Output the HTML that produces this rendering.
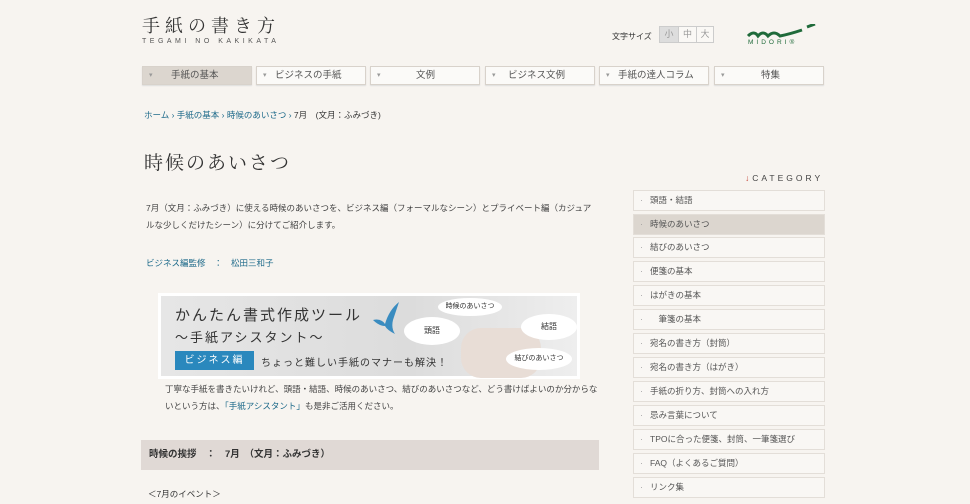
<!DOCTYPE html><html><head><meta charset="utf-8"><style>
*{margin:0;padding:0;box-sizing:border-box}
body{width:970px;height:504px;overflow:hidden;background:#f7f4f0;font-family:"Liberation Sans","Noto Sans CJK JP",sans-serif;color:#333;position:relative}
.a{position:absolute}
.nav div{position:absolute;top:66px;height:19px;width:110px;border:1px solid #d8d2cb;background:#fbfaf8;font-size:9.5px;line-height:17px;color:#555;box-shadow:0 1px 1px #ddd}
.nav div span{position:absolute;left:6px;font-size:7px;color:#999}
.side div{position:absolute;left:633px;width:192px;height:21px;border:1px solid #e3ded8;background:#f9f7f4;font-size:8.5px;line-height:19px;color:#555;padding-left:16px}
.side div:before{content:"·";position:absolute;left:6px;color:#999}
</style></head><body>
<div class="a" style="left:142px;top:12px;font-size:18px;letter-spacing:5px;font-family:'Noto Serif CJK SC',serif;color:#333">手紙の書き方</div>
<div class="a" style="left:142px;top:38px;font-size:7px;letter-spacing:3.5px;color:#555">TEGAMI NO KAKIKATA</div>
<div class="a" style="left:612px;top:31px;font-size:8px;color:#333">文字サイズ</div>
<div class="a" style="left:659px;top:26px;width:55px;height:17px;border:1px solid #ccc;background:#faf8f5;font-size:9px;line-height:15px;color:#999"><span style="display:inline-block;width:18px;text-align:center;background:#ddd">小</span><span style="display:inline-block;width:18px;text-align:center;border-left:1px solid #ccc">中</span><span style="display:inline-block;width:17px;text-align:center;border-left:1px solid #ccc">大</span></div>
<svg class="a" style="left:745px;top:24px" width="80" height="22"><path d="M3 12 q6 -6 10 0 q5 -6 10 0 q6 -6 12 0 q10 -2 22 -6 M62 3 l8 -3" stroke="#1f6a3a" stroke-width="3" fill="none"/><text x="3" y="20" font-size="6.5" fill="#1f6a3a" letter-spacing="3" font-family="Liberation Sans">MIDORI®</text></svg>
<div class="nav">
<div style="left:142px;background:#dcd6cf"><span>▾</span><b style="font-weight:normal;position:absolute;left:28px">手紙の基本</b></div>
<div style="left:256px"><span>▾</span><b style="font-weight:normal;position:absolute;left:18px">ビジネスの手紙</b></div>
<div style="left:370px"><span>▾</span><b style="font-weight:normal;position:absolute;left:45px">文例</b></div>
<div style="left:485px"><span>▾</span><b style="font-weight:normal;position:absolute;left:22px">ビジネス文例</b></div>
<div style="left:599px"><span>▾</span><b style="font-weight:normal;position:absolute;left:18px">手紙の達人コラム</b></div>
<div style="left:714px"><span>▾</span><b style="font-weight:normal;position:absolute;left:46px">特集</b></div>
</div>
<div class="a" style="left:144px;top:109px;font-size:8.5px;color:#1e6a8a">ホーム › 手紙の基本 › 時候のあいさつ › <span style="color:#333">7月　(文月：ふみづき)</span></div>
<div class="a" style="left:144px;top:148px;font-size:19px;letter-spacing:2px;font-family:'Noto Serif CJK SC',serif">時候のあいさつ</div>
<div class="a" style="left:146px;top:200px;width:450px;font-size:8.5px;line-height:17px;color:#444">7月（文月：ふみづき）に使える時候のあいさつを、ビジネス編（フォーマルなシーン）とプライベート編（カジュアルな少しくだけたシーン）に分けてご紹介します。</div>
<div class="a" style="left:146px;top:257px;font-size:8.5px;color:#1e6a8a">ビジネス編監修　：　松田三和子</div>
<div class="a" style="left:158px;top:293px;width:422px;height:86px;background:linear-gradient(90deg,#e6e6e6,#dcdcdc 60%,#eee);border:3px solid #fff">
<div class="a" style="left:14px;top:8px;font-size:15px;letter-spacing:2px;color:#333">かんたん書式作成ツール</div>
<div class="a" style="left:14px;top:31px;font-size:13px;letter-spacing:2px;color:#333">〜手紙アシスタント〜</div>
<div class="a" style="left:14px;top:55px;width:79px;height:19px;background:#2a88bd;color:#fff;font-size:10px;line-height:19px;text-align:center;letter-spacing:2px">ビジネス編</div>
<div class="a" style="left:100px;top:58px;font-size:10px;letter-spacing:1px">ちょっと難しい手紙のマナーも解決！</div>
<svg class="a" style="left:210px;top:4px" width="30" height="36"><path d="M2 20 q8 -2 12 4 q4 -14 14 -22 q-4 12 -6 18 q-2 8 2 14 q-8 -4 -10 -8 q-6 0 -12 -6z" fill="#3a8cc0"/></svg>
<div class="a" style="left:300px;top:32px;width:80px;height:50px;background:#e8ddd6;border-radius:20px"></div>
<div class="a" style="left:243px;top:21px;width:56px;height:28px;border-radius:50%;background:#fff;font-size:8px;text-align:center;line-height:28px">頭語</div>
<div class="a" style="left:277px;top:2px;width:64px;height:18px;border-radius:50%;background:#fff;font-size:7px;text-align:center;line-height:18px">時候のあいさつ</div>
<div class="a" style="left:360px;top:18px;width:56px;height:26px;border-radius:50%;background:#fff;font-size:8px;text-align:center;line-height:26px">結語</div>
<div class="a" style="left:345px;top:52px;width:66px;height:22px;border-radius:50%;background:#fff;font-size:7px;text-align:center;line-height:22px">結びのあいさつ</div>
</div>
<div class="a" style="left:165px;top:381px;width:440px;font-size:8.5px;line-height:17px;color:#444">丁寧な手紙を書きたいけれど、頭語・結語、時候のあいさつ、結びのあいさつなど、どう書けばよいのか分からないという方は、<span style="color:#1e6a8a">「手紙アシスタント」</span>も是非ご活用ください。</div>
<div class="a" style="left:141px;top:440px;width:458px;height:30px;background:#e0d9d5;font-size:9.5px;font-weight:bold;line-height:30px;padding-left:8px;color:#333">時候の挨拶　：　7月　（文月：ふみづき）</div>
<div class="a" style="left:148px;top:488px;font-size:8.5px">＜7月のイベント＞</div>
<div class="a" style="left:745px;top:173px;font-size:8.5px;letter-spacing:3px;color:#444"><span style="color:#c0392b">↓</span>CATEGORY</div>
<div class="side">
<div style="top:190px">頭語・結語</div>
<div style="top:214px;background:#dcd6cf">時候のあいさつ</div>
<div style="top:237px">結びのあいさつ</div>
<div style="top:261px">便箋の基本</div>
<div style="top:285px">はがきの基本</div>
<div style="top:309px">　筆箋の基本</div>
<div style="top:333px">宛名の書き方（封筒）</div>
<div style="top:357px">宛名の書き方（はがき）</div>
<div style="top:381px">手紙の折り方、封筒への入れ方</div>
<div style="top:405px">忌み言葉について</div>
<div style="top:429px">TPOに合った便箋、封筒、一筆箋選び</div>
<div style="top:453px">FAQ（よくあるご質問）</div>
<div style="top:477px">リンク集</div>
</div>
</body></html>
